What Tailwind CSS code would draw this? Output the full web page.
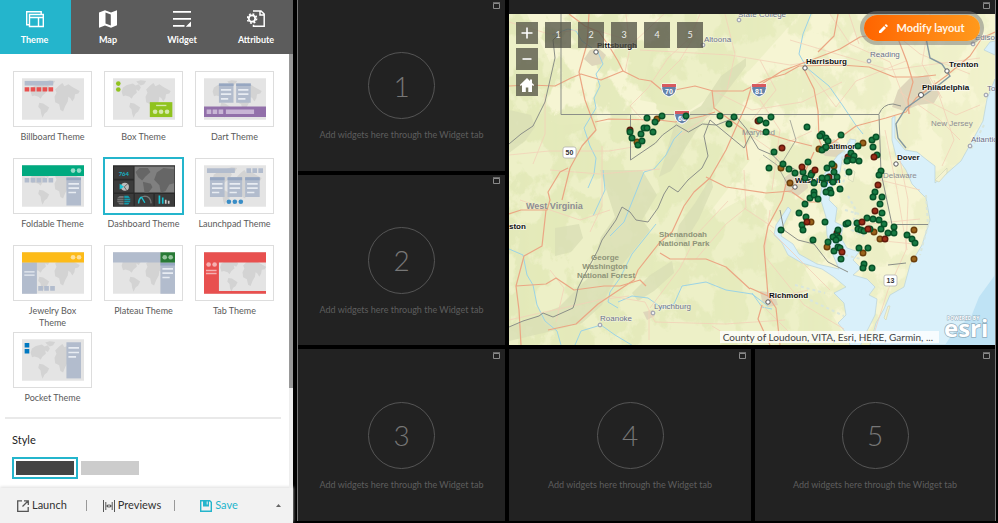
<!DOCTYPE html>
<html lang="en">
<head>
<meta charset="utf-8">
<title>App builder</title>
<script src="https://cdn.jsdelivr.net/npm/@tailwindcss/browser@4"></script>
</head>
<body class="flex h-screen min-h-[500px] overflow-hidden bg-black font-['Lato','Open_Sans',sans-serif]">

<svg width="0" height="0" class="absolute" aria-hidden="true">
  <defs>
    <symbol id="world" viewBox="0 0 187 125">
      <path d="M26 40 30 28 42 20 60 16 68 22 78 18 84 28 78 38 70 34 72 44 62 52 56 62 50 56 38 52 30 54ZM70 10 84 6 100 8 94 18 84 22 76 16ZM52 74 64 76 82 88 76 100 68 106 62 119 58 108 56 94 49 86ZM98 56 104 44 100 34 112 22 122 14 128 24 140 18 152 26 174 38 170 46 160 48 158 60 152 70 146 60 140 56 138 70 130 84 124 100 116 96 112 78 100 72Z"/>
    </symbol>
    <symbol id="max" viewBox="0 0 8 8"><path d="M.5 1.5h6v5h-6zM0 .8h7" fill="none" stroke="#8a8a8a"/></symbol>
  </defs>
</svg>

<aside class="flex w-[293px] shrink-0 flex-col bg-white">
  <nav class="flex h-[54px] shrink-0 bg-[#5c5c5c] text-[9px] font-bold leading-3 text-white">
    <button class="flex w-[71px] flex-col items-center gap-1.5 bg-[#24b5cc] pr-0.5 pt-2.5">
      <svg class="h-[18px] w-[18px]" viewBox="0 0 18 18" fill="none" stroke="#fff" stroke-width="1.4"><path d="M3.500 14.700H.7V1.700h14.500v2M3.500 4.500h13.800v12H3.500zM3.500 7.500h13.800M12.500 7.500v9"/></svg>
      <span>Theme</span>
    </button>
    <button class="flex flex-1 flex-col items-center gap-1.5 pt-2.5">
      <svg class="h-[18px] w-[18px]" viewBox="0 0 18 18"><path fill="#fff" d="M0 2.5 6 .3l6 2.200 6-2.200v15L12 17.800 6 15.500 0 17.800z"/><path fill="#5c5c5c" d="M6.500 2.500 11.800 4.400v11.200L6.500 13.600z"/></svg>
      <span>Map</span>
    </button>
    <button class="flex flex-1 flex-col items-center gap-1.5 pt-2.5">
      <svg class="h-[18px] w-[18px]" viewBox="0 0 18 18" fill="#fff"><path d="M0 1h18v1.800H0zM0 8h18v1.800H0zM0 15h11.500v1.800H0zM18 11.500v5.300h-5.300z"/></svg>
      <span>Widget</span>
    </button>
    <button class="flex flex-1 flex-col items-center gap-1.5 pt-2.5">
      <svg class="h-[18px] w-[18px]" viewBox="0 0 18 18" fill="none" stroke="#fff"><path stroke-width="1.500" d="M6 1h8l3.200 3v12.300H6.500v-1.500M13 1v4h4"/><circle cx="5" cy="8.500" r="3.200" stroke-width="1.800"/><circle cx="5" cy="8.500" r="4.600" stroke-width="1.600" stroke-dasharray="1.800 1.810"/></svg>
      <span>Attribute</span>
    </button>
  </nav>

  <section class="relative min-h-0 flex-1 overflow-hidden">
    <div class="absolute inset-y-0 right-0 w-1 bg-[#eee]"><div class="h-[77%] bg-[#999]"></div></div>

    <div class="grid grid-cols-[repeat(3,79px)] gap-x-3 pl-[13px] pt-[17px] text-center text-[9px] leading-3 text-[#5a5a5a]">
      <button class="flex h-[87px] flex-col items-center gap-1">
        <span class="flex h-14 w-full items-center justify-center border border-[#ddd]">
          <svg class="h-[42px] w-[62px]" viewBox="0 0 187 125"><path fill="#e4e4e4" d="M0 0h187v125H0z"/><use href="#world" fill="#d3d3d3" width="187" height="125"/><path fill="#b2bccd" d="M8 8h86v14H8z"/><path fill="#e8504f" d="M8 27h14v13H8zM26 27h14v13H26zM44 27h14v13H44zM62 27h14v13H62zM80 27h14v13H80z"/></svg>
        </span>Billboard Theme
      </button>
      <button class="flex h-[87px] flex-col items-center gap-1">
        <span class="flex h-14 w-full items-center justify-center border border-[#ddd]">
          <svg class="h-[42px] w-[62px]" viewBox="0 0 187 125"><path fill="#e4e4e4" d="M0 0h187v125H0z"/><use href="#world" fill="#d3d3d3" width="187" height="125"/><g fill="#90c31f"><circle cx="16" cy="16" r="7"/><circle cx="16" cy="34" r="7"/><path d="M111 72h68v45h-68z"/></g><g fill="#d5e9ac"><path d="M130 80h31v4h-31z"/><circle cx="127" cy="101" r="7"/><circle cx="145" cy="101" r="7"/><circle cx="163" cy="101" r="7"/></g></svg>
        </span>Box Theme
      </button>
      <button class="flex h-[87px] flex-col items-center gap-1">
        <span class="flex h-14 w-full items-center justify-center border border-[#ddd]">
          <svg class="h-[42px] w-[62px]" viewBox="0 0 187 125"><path fill="#e4e4e4" d="M0 0h187v125H0z"/><use href="#world" fill="#d3d3d3" width="187" height="125"/><path fill="#b2bccd" d="M45 16h44v58H45zM97 16h44v58H97z"/><path fill="#97a7c1" d="M45 16h44v7H45zM97 16h44v7H97z"/><path stroke="#e8ecf2" stroke-width="5" d="M51 35h31M51 48h31M51 62h22M103 35h31M103 48h31M103 62h22"/><path fill="#9270aa" d="M0 85h187v32H0z"/><path fill="#c8b5d5" d="M8 94h14v14H8zM26 94h14v14H26zM44 94h14v14H44zM66 94h85v14H66z"/></svg>
        </span>Dart Theme
      </button>

      <button class="flex h-[87px] flex-col items-center gap-1">
        <span class="flex h-14 w-full items-center justify-center border border-[#ddd]">
          <svg class="h-[42px] w-[62px]" viewBox="0 0 187 125"><path fill="#e4e4e4" d="M0 0h187v125H0z"/><use href="#world" fill="#d3d3d3" width="187" height="125"/><path fill="#00a97f" d="M0 0h187v32H0z"/><circle cx="154" cy="16" r="7" fill="#94dbc8"/><circle cx="172" cy="16" r="7" fill="#94dbc8"/><path fill="#b2bccd" d="M8 38h14v14H8zM26 38h14v14H26zM44 38h14v14H44zM62 38h14v14H62zM80 38h14v14H80zM134 37h44v84h-44z"/><path fill="#97a7c1" d="M134 37h44v8h-44z"/><path stroke="#e8ecf2" stroke-width="5" d="M140 56h32M140 69h32M140 82h23"/></svg>
        </span>Foldable Theme
      </button>
      <button class="flex h-[87px] flex-col items-center gap-1 whitespace-nowrap" aria-pressed="true">
        <span class="flex h-14 w-full items-center justify-center outline-2 -outline-offset-1 outline-[#24b5cc]">
          <svg class="h-[42px] w-[62px]" viewBox="0 0 187 125"><path fill="#292929" d="M0 0h187v125H0z"/><path fill="#3b3b3b" d="M3 4h59v37H3zM3 46h59v36H3zM3 87h59v36H3zM66 87h56v36H66zM126 87h58v36h-58z"/><path fill="#808080" d="M65 4h120v78H65z"/><path fill="#666" d="M68 20 80 8l25 0 8 12-15 14-10 12-12-10zM90 50l24 6 5 10-12 16H95zM124 44l8-22 20-14 32 4v42l-14 4-12 20-14 4-4-22z"/><text x="17" y="31" font-size="18" font-weight="700" fill="#15b5c5" font-family="Lato">764</text><circle cx="36" cy="65" r="12" fill="#bbb"/><path d="M33 65 20 56v17z" fill="#18c4d4"/><path stroke="#3b3b3b" stroke-width="2" d="M34 65 46 54M34 65l8 12"/><path fill="#777" d="M20 93h12v25H20l-7-7V99z"/><path fill="#159bac" d="M34 92h12l6 8v11l-6 7H34z"/><path stroke="#3b3b3b" stroke-width="2" d="M12 100h42M12 106h42M12 112h42"/><path fill="none" stroke="#777" stroke-width="4" d="M77 115q2-21 19-22 17 0 19 22"/><path fill="none" stroke="#18c4d4" stroke-width="4" d="M77 115q1-14 9-20M86 96l10 17"/><path stroke="#18c4d4" stroke-width="5" d="M140 91v25M150 97v19"/><path stroke="#ccc" stroke-width="5" d="M159 104v12M168 107v9"/></svg>
        </span>Dashboard Theme
      </button>
      <button class="flex h-[87px] flex-col items-center gap-1 whitespace-nowrap">
        <span class="flex h-14 w-full items-center justify-center border border-[#ddd]">
          <svg class="h-[42px] w-[62px]" viewBox="0 0 187 125"><path fill="#e4e4e4" d="M0 0h187v125H0z"/><use href="#world" fill="#d3d3d3" width="187" height="125"/><path fill="#b2bccd" d="M9 9h84v14H9zM128 9h14v14h-14zM146 9h14v14h-14zM164 9h14v14h-14zM18 36h44v60H18zM71 36h44v60H71zM124 36h44v60h-44z"/><path fill="#97a7c1" d="M18 36h44v9H18zM71 36h44v9H71zM124 36h44v9h-44z"/><path stroke="#e8ecf2" stroke-width="5" d="M24 56h32M24 69h32M24 82h22M77 56h32M77 69h32M77 82h22M130 56h32M130 69h32M130 82h22"/><g fill="#398dc6"><circle cx="75" cy="110" r="7"/><circle cx="93" cy="110" r="7"/><circle cx="111" cy="110" r="7"/></g></svg>
        </span>Launchpad Theme
      </button>

      <button class="flex h-[87px] flex-col items-center gap-1">
        <span class="flex h-14 w-full shrink-0 items-center justify-center border border-[#ddd]">
          <svg class="h-[42px] w-[62px]" viewBox="0 0 187 125"><path fill="#e4e4e4" d="M0 0h187v125H0z"/><use href="#world" fill="#d3d3d3" width="187" height="125"/><path fill="#b2bccd" d="M0 30h45v95H0zM49 102h14v14H49zM67 102h14v14H67zM85 102h14v14H85z"/><path fill="#fdbb18" d="M0 0h187v31H0z"/><circle cx="154" cy="15" r="7" fill="#fee09a"/><circle cx="172" cy="15" r="7" fill="#fee09a"/><path stroke="#e8ecf2" stroke-width="4" d="M7 59h31M7 69h31"/></svg>
        </span><span class="w-[60px]">Jewelry Box Theme</span>
      </button>
      <button class="flex h-[87px] flex-col items-center gap-1">
        <span class="flex h-14 w-full items-center justify-center border border-[#ddd]">
          <svg class="h-[42px] w-[62px]" viewBox="0 0 187 125"><path fill="#e4e4e4" d="M0 0h187v125H0z"/><use href="#world" fill="#d3d3d3" width="187" height="125"/><path fill="#b2bccd" d="M0 0h143v31H0zM143 31h44v94h-44z"/><path fill="#97a7c1" d="M143 31h44v9h-44z"/><path fill="#287a36" d="M143 0h44v31h-44z"/><circle cx="156" cy="15" r="7" fill="#98c49f"/><circle cx="174" cy="15" r="7" fill="#98c49f"/><path stroke="#e8ecf2" stroke-width="5" d="M149 50h32M149 63h32M149 76h22"/></svg>
        </span>Plateau Theme
      </button>
      <button class="flex h-[87px] flex-col items-center gap-1">
        <span class="flex h-14 w-full items-center justify-center border border-[#ddd]">
          <svg class="h-[42px] w-[62px]" viewBox="0 0 187 125"><path fill="#e4e4e4" d="M0 0h187v125H0z"/><use href="#world" fill="#d3d3d3" x="24" y="8" width="176" height="117"/><path fill="#e8504f" d="M0 0h187v31H45v86h142v8H0z"/><circle cx="14" cy="37" r="7" fill="#f5b0b0"/><circle cx="32" cy="37" r="7" fill="#f5b0b0"/><path stroke="#f5b0b0" stroke-width="4" d="M6 55h32M6 64h32"/></svg>
        </span>Tab Theme
      </button>

      <button class="flex h-[85px] flex-col items-center gap-1">
        <span class="flex h-14 w-full items-center justify-center border border-[#ddd]">
          <svg class="h-[42px] w-[62px]" viewBox="0 0 187 125"><path fill="#e4e4e4" d="M0 0h187v125H0z"/><use href="#world" fill="#d3d3d3" width="187" height="125"/><path fill="#0079c1" d="M8 11h14v14H8zM8 29h14v14H8z"/><path fill="#b2bccd" d="M134 9h44v109h-44z"/><path stroke="#e8ecf2" stroke-width="5" d="M140 26h32M140 40h32M140 53h23"/></svg>
        </span>Pocket Theme
      </button>
    </div>

    <hr class="ml-[5px] mr-3 border-t-2 border-[#e9e9e9]">
    <h2 class="ml-3 mt-[13px] text-[11px] leading-4 text-[#222]">Style</h2>
    <div class="ml-3 mt-[9px] flex items-center gap-[3px]">
      <button aria-label="Dark style" class="h-[22px] w-[66px] border-2 border-[#24b5cc] p-0.5"><span class="block h-full bg-[#444]"></span></button>
      <button aria-label="Light style" class="h-3.5 w-[58px] bg-[#ccc]"></button>
    </div>
  </section>

  <footer class="flex h-[35px] shrink-0 items-center bg-[#f2f2f2] pl-[17px] pr-3 text-[11px] text-[#333] shadow-[0_-1px_3px_#ddd]">
    <button class="flex items-center gap-[3px]">
      <svg class="h-3 w-3" viewBox="0 0 12 12" fill="none" stroke="#555" stroke-width="1.300"><path d="M5 .8H.7v10.500h10.500V7M7 .8h4.300V5M11 1 5.500 6.500"/></svg>Launch</button>
    <span class="ml-[19px] h-[11px] w-px bg-[#999]"></span>
    <button class="ml-4 flex items-center gap-[3px]">
      <svg class="h-3 w-3" viewBox="0 0 12 12" fill="none" stroke="#555"><path d="M.5 0v12M11.500 0v12M2.800 2v8M9.200 2v8"/><path fill="#555" stroke="none" d="M3 6l2.500-2v4zM9 6 6.500 4v4z"/></svg>Previews</button>
    <span class="ml-[13px] h-[11px] w-px bg-[#999]"></span>
    <button class="ml-[25px] flex items-center gap-[3px] text-[#24b5cc]">
      <svg class="h-3 w-3" viewBox="0 0 12 12" fill="none" stroke="#24b5cc" stroke-width="1.400"><path d="M.7.700h9l1.600 1.600v9H.7z"/><path fill="#24b5cc" stroke="none" d="M3 1h6v5.500H3z"/><path stroke="#f2f2f2" stroke-width="1" d="M7.200 1.500v3"/></svg>Save</button>
    <button aria-label="More save options" class="ml-auto"><svg class="h-[3px] w-[5px]" viewBox="0 0 5 3"><path fill="#666" d="M0 3 2.500 0 5 3z"/></svg></button>
  </footer>
</aside>

<main class="ml-1 mr-0.5 mb-0.5 grid min-w-0 flex-1 grid-cols-[207fr_242fr_240fr] grid-rows-[171fr_170fr_172fr] gap-1 border-x border-[#777] text-[#5e5e5e]">
  <section class="relative grid grid-rows-[1fr_auto_1fr] justify-items-center bg-[#222]">
    <button aria-label="Maximize panel 1" class="absolute right-1 top-0.5 h-2"><svg class="block h-2 w-2"><use href="#max"/></svg></button>
    <div class="row-start-2 flex h-[67px] w-[67px] items-center justify-center rounded-full border border-[#555] text-[28px] font-light text-[#777]">1</div>
    <p class="row-start-3 pt-2.5 text-[9px] leading-3">Add widgets here through the Widget tab</p>
  </section>

  <section class="relative col-span-2 col-start-2 row-span-2 row-start-1 flex min-w-0 flex-col bg-[#222]">
    <div class="flex h-3.5 shrink-0 justify-end pr-1 pt-0.5"><button aria-label="Maximize map" class="h-2"><svg class="block h-2 w-2"><use href="#max"/></svg></button></div>
    <div class="relative min-h-0 flex-1 overflow-hidden">
      <svg class="absolute inset-0 h-full w-full" viewBox="509 14 486 331" preserveAspectRatio="xMidYMid slice" role="img" aria-label="Map of the Mid-Atlantic states" font-family="Liberation Sans, sans-serif">
        <defs>
          <filter id="patch" x="0" y="0" width="100%" height="100%" color-interpolation-filters="sRGB"><feTurbulence type="fractalNoise" baseFrequency=".035 .028" numOctaves="5" seed="8"/><feColorMatrix values="0 0 0 0 .89  0 0 0 0 .915  0 0 0 0 .725  0 14 0 0 -6.300"/></filter>
          <linearGradient id="fade"><stop offset="0" stop-color="#fff"/><stop offset=".5" stop-color="#bbb"/><stop offset="1" stop-color="#444"/></linearGradient>
          <mask id="west"><path fill="url(#fade)" d="M509 14h486v331H509z"/></mask>
        </defs>
        <path fill="#f6f5d3" d="M509 14h486v331H509z"/>
        <path fill="#eaeec3" opacity=".75" d="M509 100 560 125 640 120 730 125 750 160 700 225 650 345H509ZM509 14h18l26 55-8 45-36-10ZM660 14H800L750 70 690 110 640 100ZM650 250 740 200 800 260 850 345H640Z"/>
        <path filter="url(#patch)" mask="url(#west)" d="M509 14h486v331H509z"/>
        <g fill="#d9deb5" opacity=".8">
          <path d="M509 110l22 5 4 12-10 14-16 12zM600 170l42 0 15 25-15 25 8 10-28 35-20 40-20 18-30 8-43 10v-14l50-20 30-30 12-40 14-20zM555 228l24-4 4 14-12 14-16 4zM650 275l22-14 2 12-20 18-16 10-6-8zM679 225l16-22 16-26 2 10-14 32-16 26-8-4zM676 120l25-14 20-30 25-18 0 8-30 40-20 25-25 40-12 6z"/>
        </g>
        <g fill="#ded6bb"><path d="M590 50l8-2 8 7-5 9-9 2-8-7zM898 90l12-12 18-3 4 10 8 8-6 10-16 2-14 6-12-4zM784 178l10-8 12 4 2 14-10 8-13-5zM818 148l16-9 12 9-9 9-12-1zM760 291l14 2 4 12-10 2-6-6zM643 312l10-2 2 6-8 4z"/></g>

        <!-- Atlantic, Delaware Bay, Chesapeake Bay and tidal rivers -->
        <g fill="#d9f0fa" stroke="#b9d3da" stroke-width=".7">
          <path d="M892 118l3-2 0 22 10 12 12 2 10 8 8 6 0 17 10-8 16-14 10-18 12-22 4-22 8-20V345H870l6-22 8-14 6-14 14-8 6-22 12-20 8-25-4-22-14-14-6-14-10-14-4-16z"/>
          <path d="M850 345l-4-12-8-10 8-8-2-12-10-10 12-6-12-10-12-8-20-6-14-8-6-12-8-8 2-10 8-12 4-6 3 3-8 16-2 10 12 8 6 10 18 10 22 5-6-14-6-20-1-18-6-20 4-22 6-10 8-10 6-4 6-12 6 1-4 12-10 8-2 12-8 14-3 14 8 8-2 14 8 4-2 12 6 10 12 4-6 8 8 8-8 7 14 4 8 8-6 8 8 4-2 16-8 16-10 22-4 12z"/>
          <path d="M984 50l6-8 5-1v14z"/>
        </g>
        <path fill="#bfe3f5" d="M995 275v70h-50l12-18 14-10 8-20z"/>
        <g fill="none" stroke="#d9e6dc" stroke-width="2" stroke-dasharray="3 3"><path d="M850 140l-8 18 4 16-6 18M848 196l8 14-4 20 12 6M850 158l8 4M984 125l-14 26M926 195l2 30-8 30M795 285l30 8M810 300l34 16M845 255l16 4M845 210l14 4"/></g>
        <g fill="#f4f3d1" stroke="#cfd3b5" stroke-width=".6"><path d="M935 180l12-12 0 5-8 9zM884 318l4-12 2 0-4 14zM850 168l5 4-2 10-5-3z"/></g>

        <!-- Rivers -->
        <g fill="none" stroke="#9bd3e6" stroke-width="1">
          <path d="M597 50l6 14-7 10 4 12-6 12 2 10-12 20 6 18 6 12-2 16-6 14M552 35l16-6 8 2 6 10 10 7M811 14l-8 20-4 20 8 14 22 18 14 20 12 18 8 10M682 131l-8 8-8 16-12 14-10 3-8 20-12 30-14 14M603 170l2 20-12 26M656 224l-24 30-12 24-10 14-2 10 10 6M509 249l14 6 4 20 6 10 4 20 8 16 12 10 4 14M618 302l14-6 16 2 14 10 12-4 8-18 24-4 20 8 26 4 16 12M575 345l6-14 20-6 14 10 20 12M752 293l10 14 10 2"/>
        </g>
        <!-- Minor roads -->
        <g fill="none" stroke="#f2d0b8" stroke-width=".8">
          <path d="M509 22l40 12 40-6 45 14 30-28M700 14l-10 24-22 20-20 30-18 18 20 22M509 155l40-4 60 0 36-6M545 94l0 40-12 30M625 72l5-24-4-34M640 50l90 5 60 10 40-6M660 80l20-20 18-30M712 90l40 20 50-8 40-20M790 40l40 12 60 18 90-12M830 14l20 30 40 18 20 52M870 14l50 40 50 20M806 67l30 40 20-26 50-20M760 60l16 30-24 30M760 100l20 30-8 60M900 92l40 28 20 20M916 95l40 20 24-10M934 80l20 60-12 26M509 320l90-20 30-4M550 270l14 18-8 34M590 232l12-26 0-60M610 296l35 6 10 20 70 2 60-4M649 310l0 30M650 308l30-40 18-35 30-32M744 170l2 38-20 16-30 35M744 208l30 20M712 326l20 12M770 210l-6 45 40 50 40 24M762 305l30 30M768 300l40-10M770 230l30 30 30 30M900 160l8 40-2 50-18 40-16 50M885 130l12 60 10 60M880 180l40 10M860 225l60-6M874 240l40 4M550 170l50 4 60-5M520 200l60 20 30-10M680 135l30-20M725 14l10 40-8 36M849 14l10 30M930 14l-8 50 20 34M750 135l20 14 25 26M782 145l30-14"/>
        </g>
        <!-- Highways -->
        <g fill="none" stroke="#eba684" stroke-width="1.200" stroke-linejoin="round">
          <path d="M509 86l20-1 26 1 16-8 10-4 20 6 22-9 16 8 12 2 12 10 12-1 20-4 18 5 30 0 24-12 18-5 14-8 42-1 28 2 25 10 24 0 18-2"/>
          <path d="M569 14l16 12 14 6 10 14 9 15 5 10M589 14l-2 30-8 28 6 28 11 30-14 16-12 22-8 32M595 122l14-3 50 1 16 2 28-6 12-4"/>
          <path d="M712 90l2 18 30 22 4 30M752 85l-6 20-20 45-16 28-16 14-10 14-12 26-12 10-22 28-4 10-36 24-22 20-28 6"/>
          <path d="M509 214l12-4 26 0 3-10-2-8 12-20 8-4M546 210l-4 36-18 10-8 30 30-2 10-6 18 12 30-4 16 0 20-6 6 6M516 286l3 24 2 35"/>
          <path d="M660 253l10 6 36 0 20 8 24 22M706 177l20 10 40 6 26-2M838 14l-4 22-10 10-6 6M760 85l22-14 32-12 26-10 20-12 50-8M804 69l10 20 4 22 1 28 3 8M816 150l18-8 22-16 30-8 20-6 10-14 30-22 24-20 12-18 13-6M897 36l10 26 6 20-5 18 1 14M792 190l12-16 10-22M786 184l-4 16-14 26-4 20 4 50 8 12 4 37M812 146l-24-6-38-12M750 288l18 8 20 2M762 305l-4 14 12 26M792 192l14 10 14 0"/>
        </g>
        <!-- State boundaries -->
        <g fill="none" stroke="#8b8f88" stroke-width="1">
          <path d="M561 14V114.500H879l2 58 11 52h36M630.500 114.500V160l25-17 7-8 14-10 12 7 14-8 14 1 20-8 10 12 12 20 14 6 10 10 12 4"/>
          <path d="M561 32l-8 8 2 18-10 44-12 24-12 8-12 10M509 327l14-6 16-5 4-3 10 4 20-9 2-6 3-14 6-12 14-26 4-10 14-20 6-13 8 5 6 8 12 2 10-14 6-14 5-8 9 6 10-12 14-12 6-12-4-20 6-16 34 28 6-12"/>
          <path d="M879 114q4-10 14-10l8 2M780 210l4 20 14 10 16 4 14 18 20 10M888 265l18-2"/>
          <path stroke="#8499a1" stroke-width="1.400" d="M926 38l4 20 12 6 8 12-10 8-14 10-20 14-10 16 2 14 8 10"/>
          <path d="M763 155l14 10 10 18 8 6M790 120l6 20-16 26" stroke-width=".7"/>
        </g>
        <!-- Route shields -->
        <g font-size="7" font-weight="700" fill="#fff" text-anchor="middle">
          <g transform="translate(669 90)"><path fill="#6482a9" stroke="#fff" d="M-7-6H7Q9 4 0 7-9 4-7-6Z"/><path fill="#d75a5f" d="M-7-6H7v3H-7z"/><text y="4">70</text></g>
          <g transform="translate(682 117)"><path fill="#6482a9" stroke="#fff" d="M-7-6H7Q9 4 0 7-9 4-7-6Z"/><path fill="#d75a5f" d="M-7-6H7v3H-7z"/><text y="4">68</text></g>
          <g transform="translate(759 90)"><path fill="#6482a9" stroke="#fff" d="M-7-6H7Q9 4 0 7-9 4-7-6Z"/><path fill="#d75a5f" d="M-7-6H7v3H-7z"/><text y="4">81</text></g>
          <g fill="#fff" stroke="#aaa" stroke-width=".7"><rect x="563" y="147" width="13" height="11" rx="2"/><rect x="884" y="275" width="13" height="11" rx="2"/></g>
          <g fill="#333"><text x="569.500" y="155">50</text><text x="890.500" y="283">13</text></g>
        </g>
        <!-- Place names -->
        <g fill="#fff" stroke="#555" stroke-width="1"><circle cx="596" cy="52" r="2.200"/><circle cx="805" cy="68" r="2.200"/><circle cx="947" cy="71" r="2.200"/><circle cx="921" cy="95" r="2.500"/><circle cx="896" cy="164" r="2.200"/><circle cx="795" cy="187" r="2.200"/><circle cx="768" cy="302" r="2.200"/></g>
        <g fill="#eee" stroke="#8a8fa3" stroke-width=".9"><circle cx="869" cy="61" r="1.900"/><circle cx="739" cy="20" r="1.900"/><circle cx="703" cy="45" r="1.900"/><circle cx="973" cy="44" r="1.900"/><circle cx="986" cy="95" r="1.900"/><circle cx="970" cy="146" r="1.900"/><circle cx="653" cy="313" r="1.900"/><circle cx="600" cy="325" r="1.900"/></g>
        <g font-size="8" font-weight="700" fill="#111" stroke="#fff" stroke-opacity=".65" stroke-width="1.500" paint-order="stroke">
          <text x="597" y="48">Pittsburgh</text><text x="806" y="64">Harrisburg</text><text x="949" y="67">Trenton</text><text x="922" y="90">Philadelphia</text><text x="897" y="160">Dover</text><text x="823" y="149">Baltimore</text><text x="795" y="183">Washington</text><text x="769" y="298">Richmond</text><text x="509" y="229">ston</text>
        </g>
        <g font-size="8" fill="#6b7086" stroke="#fff" stroke-opacity=".5" stroke-width="1.200" paint-order="stroke">
          <text x="738" y="17">State College</text><text x="704" y="42">Altoona</text><text x="870" y="57">Reading</text><text x="975" y="40">Edison</text><text x="987" y="91">Toms</text><text x="971" y="142">Atlantic</text><text x="654" y="309">Lynchburg</text><text x="600" y="321">Roanoke</text>
        </g>
        <g font-size="8" fill="#8d8d94"><text x="931" y="126">New Jersey</text><text x="883" y="178">Delaware</text><text x="742" y="135">Maryland</text><text x="526" y="209" font-size="9" font-weight="700">West Virginia</text></g>
        <g font-size="8" fill="#8f9479" font-weight="700" text-anchor="middle"><text x="683" y="237">Shenandoah</text><text x="684" y="246">National Park</text><text x="605" y="260">George</text><text x="605" y="269">Washington</text><text x="606" y="278">National Forest</text></g>
        <g id="sites"></g>
        <g fill="#fff" stroke="#708c9c" stroke-opacity=".65" paint-order="stroke" font-family="Open Sans, sans-serif" font-weight="700"><text x="947" y="320" font-size="5" stroke-width="1">POWERED BY</text><text x="944" y="337" font-size="24" stroke-width="1.500">esri</text></g>
      </svg>

      <div class="absolute left-[7px] top-2 flex gap-[7px]">
        <div class="flex flex-col gap-1">
          <button aria-label="Zoom in" class="flex h-[22px] w-[22px] items-center justify-center bg-[#5a5a4b]/80"><svg class="h-3 w-3" viewBox="0 0 12 12" stroke="#fff" stroke-width="1.600"><path d="M6 .5v11M.5 6h11"/></svg></button>
          <button aria-label="Zoom out" class="flex h-[22px] w-[22px] items-center justify-center bg-[#5a5a4b]/80"><svg class="h-3 w-3" viewBox="0 0 12 12" stroke="#fff" stroke-width="1.600"><path d="M1.500 6h9"/></svg></button>
          <button aria-label="Home" class="flex h-[22px] w-[22px] items-center justify-center bg-[#5a5a4b]/80"><svg class="h-4 w-4" viewBox="0 0 16 16"><path fill="#fff" d="M8 1 .8 8l1 1L3 8v7h3.800v-4.500h2.500V15H13V8l1.200 1 1-1L13 5.900V2.500h-2V4z"/></svg></button>
        </div>
        <div class="flex gap-[7px] text-[9px] text-[#eee]">
          <button class="h-[26px] w-[26px] bg-[#4e4e41]/75">1</button>
          <button class="h-[26px] w-[26px] bg-[#4e4e41]/75">2</button>
          <button class="h-[26px] w-[26px] bg-[#4e4e41]/75">3</button>
          <button class="h-[26px] w-[26px] bg-[#4e4e41]/75">4</button>
          <button class="h-[26px] w-[26px] bg-[#4e4e41]/75">5</button>
        </div>
      </div>
      <p class="absolute bottom-0.5 right-14 bg-white/80 pl-[3px] pr-1.5 text-[10px] leading-3 text-[#444]">County of Loudoun, VITA, Esri, HERE, Garmin, ...</p>
    </div>
    <button class="absolute right-[15px] top-[15px] flex h-[26px] w-[116px] items-center justify-center gap-2 rounded-full bg-linear-to-r from-[#ff6400] to-[#ff991c] text-[11px] font-bold text-[#fff5e8] ring-4 ring-[#777]/50">
      <svg class="h-[9px] w-[9px]" viewBox="0 0 9 9" fill="#fff"><path d="M0 7v2h2l5-5-2-2zM5.700 1.300l2 2L9 2 7 0z"/></svg>Modify layout</button>
  </section>

  <section class="relative grid grid-rows-[1fr_auto_1fr] justify-items-center bg-[#222]">
    <button aria-label="Maximize panel 2" class="absolute right-1 top-0.5 h-2"><svg class="block h-2 w-2"><use href="#max"/></svg></button>
    <div class="row-start-2 flex h-[67px] w-[67px] items-center justify-center rounded-full border border-[#555] text-[28px] font-light text-[#777]">2</div>
    <p class="row-start-3 pt-2.5 text-[9px] leading-3">Add widgets here through the Widget tab</p>
  </section>
  <section class="relative grid grid-rows-[1fr_auto_1fr] justify-items-center bg-[#222]">
    <button aria-label="Maximize panel 3" class="absolute right-1 top-[3px] h-2"><svg class="block h-2 w-2"><use href="#max"/></svg></button>
    <div class="row-start-2 flex h-[67px] w-[67px] items-center justify-center rounded-full border border-[#555] text-[28px] font-light text-[#777]">3</div>
    <p class="row-start-3 pt-2.5 text-[9px] leading-3">Add widgets here through the Widget tab</p>
  </section>
  <section class="relative grid grid-rows-[1fr_auto_1fr] justify-items-center bg-[#222]">
    <button aria-label="Maximize panel 4" class="absolute right-1 top-[3px] h-2"><svg class="block h-2 w-2"><use href="#max"/></svg></button>
    <div class="row-start-2 flex h-[67px] w-[67px] items-center justify-center rounded-full border border-[#555] text-[28px] font-light text-[#777]">4</div>
    <p class="row-start-3 pt-2.5 text-[9px] leading-3">Add widgets here through the Widget tab</p>
  </section>
  <section class="relative grid grid-rows-[1fr_auto_1fr] justify-items-center bg-[#222]">
    <button aria-label="Maximize panel 5" class="absolute right-1 top-[3px] h-2"><svg class="block h-2 w-2"><use href="#max"/></svg></button>
    <div class="row-start-2 flex h-[67px] w-[67px] items-center justify-center rounded-full border border-[#555] text-[28px] font-light text-[#777]">5</div>
    <p class="row-start-3 pt-2.5 text-[9px] leading-3">Add widgets here through the Widget tab</p>
  </section>
</main>

<script>
// Monitoring sites: x,y pairs grouped by status.
const groups = [
  ['#8a2a17', '#5c1a0c', '630,130 758,121 829,177 848,157 837,233'],
  ['#9b641c', '#6c3f0c', '657,119 637,142 819,149 863,143 781,168 790,183 834,166 811,222 874,232 880,239 914,230 914,259 863,253 827,247'],
  ['#187a43', '#075128', '647,118 655,122 662,116 686,116 630,132 632,138 638,145 642,141 641,134 644,128 647,128 653,132 720,116 734,117 729,124 760,120 771,117 766,123 766,132 774,152 807,127 822,134 820,136 826,138 828,141 841,135 825,148 822,150 826,147 858,146 872,140 876,137 873,147 877,155 848,160 851,153 854,156 853,160 859,161 847,161 769,168 783,164 789,169 795,173 808,162 803,172 812,173 811,175 805,178 814,183 827,168 832,164 834,172 827,178 822,178 824,184 837,177 830,190 833,182 849,172 840,189 831,193 814,192 826,192 810,198 814,195 818,199 805,204 799,213 806,217 802,225 803,230 781,230 825,222 813,240 828,242 838,230 836,236 833,237 839,238 834,251 838,247 840,248 841,259 881,171 879,175 875,192 873,197 882,197 880,204 882,213 879,220 873,219 867,218 884,224 894,227 894,233 888,233 881,229 857,223 846,224 848,223 858,229 861,230 864,231 870,229 859,248 868,248 864,264 863,268 872,268 907,235 912,239 915,243 836,240'],
  ['#9b2d18', '#601a0c', '868,229 885,239 842,252 878,185 874,157 875,211 862,222 807,222 815,170 802,167 782,148'],
];
const layer = document.getElementById('sites');
for (const [fill, stroke, list] of groups) {
  for (const pair of list.split(' ')) {
    const [x, y] = pair.split(',');
    const dot = document.createElementNS('http://www.w3.org/2000/svg', 'circle');
    Object.entries({ cx: x, cy: y, r: 2.8, fill, stroke, 'stroke-width': 1.4 }).forEach(([k, v]) => dot.setAttribute(k, v));
    layer.append(dot);
  }
}
</script>
</body>
</html>
